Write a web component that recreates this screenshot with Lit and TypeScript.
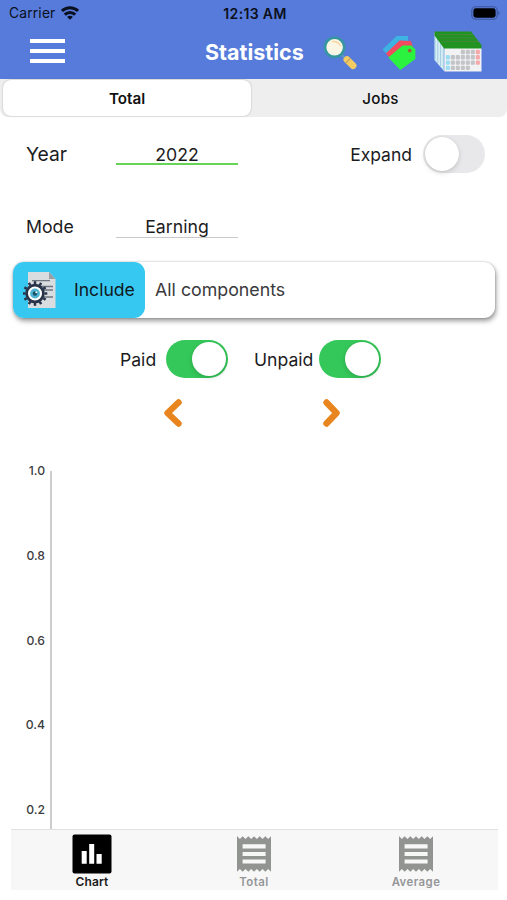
import { LitElement, html, css, svg } from "lit";
import { customElement, property } from "lit/decorators.js";

@customElement("ios-switch")
class IosSwitch extends LitElement {
  @property({ type: Boolean, reflect: true }) on = false;
  static styles = css`
    :host { display: flex; flex: none; box-sizing: border-box; width: 62px; height: 38px; border-radius: 19px; padding: 2px; background: #e8e8ea; }
    :host([on]) { background: #34c759; justify-content: flex-end; }
    .knob { width: 34px; height: 34px; border-radius: 50%; background: #fff; box-shadow: 0 2px 5px rgba(0, 0, 0, 0.14), 0 0 1px rgba(0, 0, 0, 0.15); }
  `;
  render() {
    return html`<div class="knob"></div>`;
  }
}

const wifi = svg`<svg width="18" height="14" viewBox="0 0 18 14" fill="none" stroke="#0b1020" stroke-width="3">
  <path d="M0.9 5a11.5 11.5 0 0 1 16.2 0"/><path d="M3.8 8.6a7.3 7.3 0 0 1 10.4 0"/>
  <path d="M9 13.8L6.1 11a4 4 0 0 1 5.8 0z" fill="#0b1020" stroke="none"/></svg>`;

const battery = svg`<svg width="30" height="14" viewBox="0 0 30 14">
  <rect x="0.8" y="0.8" width="25.4" height="12.4" rx="3.8" fill="none" stroke="#3f5699" stroke-width="1.1"/>
  <rect x="2.4" y="2.3" width="22.2" height="9.4" rx="2.4" fill="#000"/>
  <path d="M27.4 4.8a2.6 2.6 0 0 1 0 4.4z" fill="#3f5699"/></svg>`;

const magnifier = svg`<svg width="34" height="35" viewBox="0 0 34 35">
  <path d="M17 18L23 24" stroke="#5d9cba" stroke-width="2.2"/>
  <circle cx="11.6" cy="12.3" r="9.6" fill="#fbf6e3" stroke="#35969f" stroke-width="2.6"/>
  <path d="M9 6.6q6-1 8.4 4.4" fill="none" stroke="#f5d5a0" stroke-width="1.4"/>
  <path d="M24 24.6L30 30.6" stroke="#f2cb63" stroke-width="7" stroke-linecap="round"/>
  <path d="M22.6 28.2L27.6 23.2" stroke="#c9a568" stroke-width="1.3"/></svg>`;

const tags = svg`<svg width="34" height="36" viewBox="0 0 34 36">
  <path d="M0.5 15.5L14.5 2H26v7L7 22z" fill="#3cb3e3"/>
  <path d="M3.8 19.5L17.5 6.5L29 7l2 7L9 25z" fill="#f14b60"/>
  <path d="M6.3 23.5L20.6 11.5H29.4L33.4 15.5V25L18.3 36z" fill="#2bf23f"/>
  <circle cx="27.7" cy="16.6" r="1.9" fill="#9c603c"/></svg>`;

const cells = [0, 1, 2, 3].flatMap((r) => [0, 1, 2, 3, 4, 5, 6].map((c) => ({ r, c })))
  .filter(({ r, c }) => (r > 0 || c > 2) && (r < 3 || c < 5));
const calendar = svg`<svg width="48" height="41" viewBox="0 0 48 41">
  <path d="M0.5 1V29L10.5 40.5V18z" fill="#d8eef4"/>
  ${[0, 1, 2, 3].map((i) => svg`<path d=${`M${1 + i * 2.8} ${4 + i * 3.6}V${29 + i * 3.1}`} stroke="#8bbedc" stroke-width="0.7"/>`)}
  <path d="M0.5 0.5H37L47.5 14V18H10.5L0.5 4.5z" fill="#219321"/>
  <path d="M3 3.5H39M5.5 7H42M8 10.5H45" stroke="#4a853f" stroke-width="0.9"/>
  <rect x="10.5" y="17.5" width="37" height="23" fill="#f1f2f3"/>
  ${cells.map(({ r, c }) => svg`<rect x=${11.8 + c * 5} y=${18.8 + r * 5.3} width="4.1" height="4.4" rx="1" fill=${c === 0 ? "#9adcf0" : c === 6 ? "#f5a9ab" : "#c2c4c7"}/>`)}</svg>`;

const teeth = Array.from({ length: 12 }, (_, i) => i * 30);
const docGear = svg`<svg width="34" height="36" viewBox="0 0 34 36">
  <path d="M5 0H26L32.5 7V36H5z" fill="#dadddf"/><path d="M26 0V7H32.5z" fill="#9b9fa5"/>
  <path d="M9 8.6H27M16 14.5H30M20 18H30M20 25H30" stroke="#6d7580" stroke-width="1.4"/>
  <g stroke="#28334a" stroke-width="2.5">${teeth.map((a) => svg`<path d="M12 9.2V12" transform=${`rotate(${a} 12 21.5)`}/>`)}</g>
  <circle cx="12" cy="21.5" r="8.4" fill="#fff" stroke="#28334a" stroke-width="2.7"/>
  <circle cx="12" cy="21.5" r="4.9" fill="#4fb4d2"/><circle cx="12" cy="21.5" r="2.3" fill="#1f5167"/><circle cx="13.3" cy="20.2" r="1" fill="#e4fbff"/></svg>`;

const chevron = (d: string) => svg`<svg width="20" height="30" viewBox="0 0 20 30" fill="none" stroke="#e8851e" stroke-width="6.4" stroke-linecap="round" stroke-linejoin="round"><path d=${d}/></svg>`;

const chartIcon = svg`<svg width="40" height="40" viewBox="0 0 40 40">
  <rect x="0.5" y="0.5" width="39" height="39" rx="2" fill="#000"/>
  <path d="M9.7 17H14.7V29.8H9.7zM17.2 10H22.2V29.8H17.2zM24.5 20H29.7V29.8H24.5z" fill="#fff"/></svg>`;

const zig = () => {
  let d = "M0 0";
  for (let i = 0; i < 6; i++) d += `L${i * 5.67 + 2.83} 3L${(i + 1) * 5.67} 0.3`;
  d += "V35.7";
  for (let i = 6; i > 0; i--) d += `L${i * 5.67 - 2.83} 33L${(i - 1) * 5.67} 35.7`;
  return d + "Z";
};
const receipt = svg`<svg width="34" height="36" viewBox="0 0 34 36">
  <path d=${zig()} fill="#929492"/>
  <path d="M5.6 8.3H28.6V12.5H5.6zM5.6 15.9H28.6V20.1H5.6zM5.6 23.4H28.6V27.6H5.6z" fill="#f7f7f7"/></svg>`;

@customElement("app-root")
class AppRoot extends LitElement {
  static styles = css`
    :host { display: flex; flex-direction: column; width: 507px; height: 900px; overflow: hidden; background: #fff; color: #1c1c1e; font-family: Inter, "Liberation Sans", sans-serif; font-size: 18px; }
    * { box-sizing: border-box; }
    svg { display: block; flex: none; }
    header { height: 79px; flex: none; background: #567bda; }
    .status { display: grid; grid-template-columns: 1fr auto 1fr; align-items: center; height: 26px; padding: 0 6px 0 9px; font-size: 13.8px; color: #0b1020; }
    .carrier { display: flex; align-items: center; gap: 6px; letter-spacing: 0.18px; }
    .time { font-weight: 600; font-size: 14px; letter-spacing: 0.35px; }
    .battery { justify-self: end; }
    .nav { display: flex; height: 53px; padding: 1px 0 0 30px; color: #fff; }
    .burger { display: flex; flex-direction: column; justify-content: space-between; width: 35px; height: 24px; margin-top: 12px; }
    .burger i { height: 4px; background: #fff; }
    .title { width: 100px; margin: 12px 18px 0 140px; font-size: 21.5px; line-height: 26px; font-weight: 700; white-space: nowrap; }
    .search { margin-top: 8px; }
    .tags { margin: 7px 0 0 25px; }
    .cal { margin: 4px 0 0 18px; }
    .tabs { display: grid; grid-template-columns: 248px 1fr; height: 38px; flex: none; padding: 1px 0 0 3px; background: #eeeeef; border-radius: 0 0 8px 8px; font-size: 15.2px; font-weight: 600; color: #111; }
    .tabs div { display: flex; align-items: center; justify-content: center; padding-top: 0; }
    .tabs .sel { background: #fff; border-radius: 8px; height: 36px; box-shadow: 0 0 2px rgba(0, 0, 0, 0.28); }
    .tabs .other { font-weight: 500; padding-left: 3px; height: 36px; letter-spacing: 0.2px; }
    .field { display: flex; align-items: center; flex: none; padding: 0 22px 0 26px; }
    .year { height: 74px; }
    .mode { height: 71px; }
    .label { width: 90px; }
    .year .label { font-size: 19.3px; }
    .mode .label { font-size: 17.7px; }
    .input { width: 122px; height: 22px; line-height: 22px; text-align: center; border-bottom: 1px solid #c9c9cc; font-size: 17.7px; }
    .year .input { line-height: 24px; border-bottom: 2px solid #68d457; }
    .grow { flex: 1; }
    .expand { margin-right: 11px; font-size: 17.5px; }
    .card { display: flex; flex: none; height: 56px; margin: 0 12px 0 13px; border-radius: 11px; background: #fff; box-shadow: 1px 3px 5px rgba(0, 0, 0, 0.4), 0 0 2px rgba(0, 0, 0, 0.25); }
    .include { display: flex; align-items: center; width: 132px; padding-left: 10px; gap: 17px; border-radius: 11px; background: #37c8f1; color: #101820; font-size: 17.6px; }
    .include span { margin-top: -1px; }
    .all { display: flex; align-items: center; padding: 0 0 1px 10px; color: #3a3a3c; font-size: 17.8px; }
    .switches { display: flex; align-items: center; flex: none; height: 38px; margin-top: 22px; padding-left: 120px; font-size: 17.6px; }
    .paid { width: 46px; }
    .unpaid { width: 65px; margin-left: 26px; white-space: nowrap; }
    .arrows { display: flex; flex: none; justify-content: space-between; height: 30px; margin: 20px 165px 0 163px; }
    .chart { display: flex; flex: 1; margin-top: 43px; min-height: 0; }
    .axis { width: 52px; border-right: 2px solid #cdcdcf; padding-right: 5px; text-align: right; font-size: 12.2px; font-weight: 500; color: #3c3c3e; }
    .tick { height: 84.8px; flex: none; }
    .tick span { display: block; line-height: 14px; margin-top: -7px; }
    .ticks { display: flex; flex-direction: column; height: 358px; }
    .bar { display: grid; grid-template-columns: repeat(3, 162px); flex: none; width: 487px; height: 61px; margin: 0 10px 10px 11px; border-top: 1px solid #dfe1e1; background: #f7f7f7; color: #949698; font-size: 11.4px; font-weight: 600; }
    .item { display: flex; flex-direction: column; align-items: center; padding-top: 6px; letter-spacing: 0.45px; }
    .item.active { padding-top: 4px; color: #1b1b1b; letter-spacing: 0.1px; font-size: 12px; }
    .item span { line-height: 14px; margin-top: 3px; }
    .item.active span { margin-top: 1px; }
  `;
  render() {
    return html`
      <header>
        <div class="status">
          <div class="carrier">Carrier ${wifi}</div>
          <div class="time">12:13 AM</div>
          <div class="battery">${battery}</div>
        </div>
        <div class="nav">
          <div class="burger"><i></i><i></i><i></i></div>
          <div class="title">Statistics</div>
          <div class="search">${magnifier}</div>
          <div class="tags">${tags}</div>
          <div class="cal">${calendar}</div>
        </div>
      </header>
      <div class="tabs"><div class="sel">Total</div><div class="other">Jobs</div></div>
      <div class="field year">
        <div class="label">Year</div><div class="input">2022</div>
        <div class="grow"></div><div class="expand">Expand</div><ios-switch></ios-switch>
      </div>
      <div class="field mode"><div class="label">Mode</div><div class="input">Earning</div></div>
      <div class="card"><div class="include">${docGear}<span>Include</span></div><div class="all">All components</div></div>
      <div class="switches">
        <div class="paid">Paid</div><ios-switch on></ios-switch>
        <div class="unpaid">Unpaid</div><ios-switch on></ios-switch>
      </div>
      <div class="arrows">${chevron("M15.5 4.5L4.5 15L15.5 25.5")}${chevron("M4.5 4.5L14.5 15L4.5 25.5")}</div>
      <div class="chart">
        <div class="axis"><div class="ticks">
          ${["1.0", "0.8", "0.6", "0.4", "0.2"].map((t) => html`<div class="tick"><span>${t}</span></div>`)}
        </div></div>
      </div>
      <div class="bar">
        <div class="item active">${chartIcon}<span>Chart</span></div>
        <div class="item">${receipt}<span>Total</span></div>
        <div class="item">${receipt}<span>Average</span></div>
      </div>`;
  }
}
